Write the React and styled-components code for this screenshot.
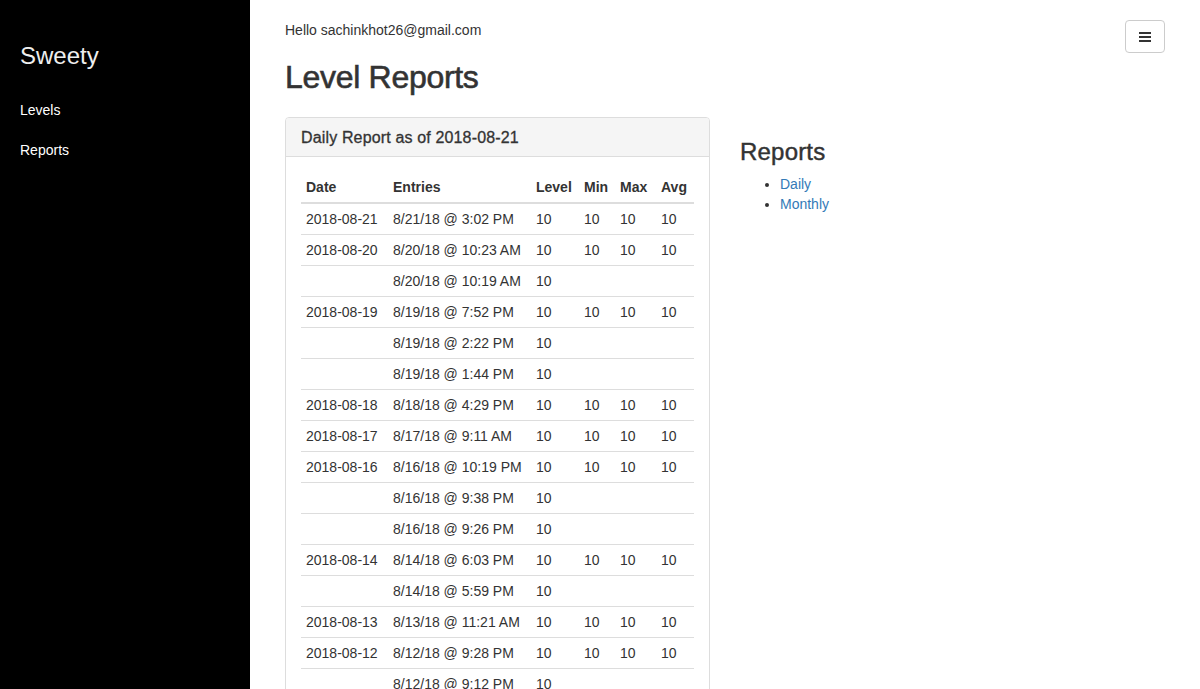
import React from "react";
import styled, { createGlobalStyle } from "styled-components";

const Global = createGlobalStyle`
  html, body { margin: 0; padding: 0; }
  body {
    font-family: "Liberation Sans", Arial, Helvetica, sans-serif;
    font-size: 14px;
    line-height: 20px;
    color: #333;
    background: #fff;
  }
  * { box-sizing: border-box; }
`;

const Layout = styled.div`
  display: flex;
  min-height: 100vh;
`;

const Sidebar = styled.nav`
  width: 250px;
  flex: 0 0 250px;
  background: #000;
  padding: 40px 20px 0;
`;

const Brand = styled.div`
  color: #eee;
  font-size: 24px;
  line-height: 32px;
  margin-bottom: 28px;
`;

const SideLink = styled.a`
  display: block;
  color: #fff;
  text-decoration: none;
  font-size: 14px;
  line-height: 20px;
  margin-bottom: 20px;
`;

const Main = styled.main`
  flex: 1;
  padding: 20px 35px 0;
`;

const TopBar = styled.div`
  display: flex;
  justify-content: space-between;
  align-items: flex-start;
  height: 20px;
`;

const MenuButton = styled.button`
  width: 40px;
  height: 33px;
  background: #fff;
  border: 1px solid #ccc;
  border-radius: 4px;
  display: flex;
  align-items: center;
  justify-content: center;
  padding: 0;
  color: #333;
`;

const Title = styled.h1`
  font-size: 32px;
  font-weight: 400;
  letter-spacing: -0.3px;
  -webkit-text-stroke: 0.6px #333;
  line-height: 35px;
  margin: 20px 0 22px;
`;

const Columns = styled.div`
  display: flex;
  gap: 30px;
  align-items: flex-start;
`;

const Panel = styled.section`
  width: 425px;
  border: 1px solid #ddd;
  border-radius: 4px;
  background: #fff;
`;

const PanelHeading = styled.div`
  background: #f5f5f5;
  border-bottom: 1px solid #ddd;
  border-radius: 3px 3px 0 0;
  padding: 11px 15px 9px;
  font-size: 16px;
  letter-spacing: 0.15px;
  -webkit-text-stroke: 0.3px #333;
  line-height: 17.6px;
`;

const PanelBody = styled.div`
  padding: 15px;
`;

const Table = styled.table`
  width: 100%;
  border-collapse: collapse;
  border-spacing: 0;
`;

const Th = styled.th`
  text-align: left;
  font-weight: bold;
  padding: 5px;
  line-height: 20px;
  border-bottom: 2px solid #ddd;
  width: ${(p) => p.$w}px;
`;

const Td = styled.td`
  padding: 5px;
  line-height: 20px;
  border-top: 1px solid #ddd;
  white-space: nowrap;
`;

const Side = styled.aside`
  padding-top: 0;
`;

const SideTitle = styled.h3`
  font-size: 24px;
  font-weight: 400;
  -webkit-text-stroke: 0.45px #333;
  letter-spacing: 0.2px;
  line-height: 26px;
  margin: 22px 0 9px;
`;

const List = styled.ul`
  margin: 0;
  padding-left: 40px;
`;

const ListLink = styled.a`
  color: #337ab7;
  text-decoration: none;
`;

const full = ["10", "10", "10", "10"];
const one = ["10", "", "", ""];

const rows = [
  ["2018-08-21", "8/21/18 @ 3:02 PM", full],
  ["2018-08-20", "8/20/18 @ 10:23 AM", full],
  ["", "8/20/18 @ 10:19 AM", one],
  ["2018-08-19", "8/19/18 @ 7:52 PM", full],
  ["", "8/19/18 @ 2:22 PM", one],
  ["", "8/19/18 @ 1:44 PM", one],
  ["2018-08-18", "8/18/18 @ 4:29 PM", full],
  ["2018-08-17", "8/17/18 @ 9:11 AM", full],
  ["2018-08-16", "8/16/18 @ 10:19 PM", full],
  ["", "8/16/18 @ 9:38 PM", one],
  ["", "8/16/18 @ 9:26 PM", one],
  ["2018-08-14", "8/14/18 @ 6:03 PM", full],
  ["", "8/14/18 @ 5:59 PM", one],
  ["2018-08-13", "8/13/18 @ 11:21 AM", full],
  ["2018-08-12", "8/12/18 @ 9:28 PM", full],
  ["", "8/12/18 @ 9:12 PM", one],
  ["2018-08-11", "8/11/18 @ 8:40 PM", full],
];

const Hamburger = () => (
  <svg width="12" height="12" viewBox="0 0 12 12" aria-hidden="true">
    <rect x="0" y="1" width="12" height="2" fill="#333" />
    <rect x="0" y="5" width="12" height="2" fill="#333" />
    <rect x="0" y="9" width="12" height="2" fill="#333" />
  </svg>
);

export default function App() {
  return (
    <>
      <Global />
      <Layout>
        <Sidebar>
          <Brand>Sweety</Brand>
          <SideLink href="#">Levels</SideLink>
          <SideLink href="#">Reports</SideLink>
        </Sidebar>
        <Main>
          <TopBar>
            <span>Hello sachinkhot26@gmail.com</span>
            <MenuButton aria-label="menu">
              <Hamburger />
            </MenuButton>
          </TopBar>
          <Title>Level Reports</Title>
          <Columns>
            <Panel>
              <PanelHeading>Daily Report as of 2018-08-21</PanelHeading>
              <PanelBody>
                <Table>
                  <thead>
                    <tr>
                      <Th $w={87}>Date</Th>
                      <Th $w={143}>Entries</Th>
                      <Th $w={48}>Level</Th>
                      <Th $w={36}>Min</Th>
                      <Th $w={41}>Max</Th>
                      <Th $w={38}>Avg</Th>
                    </tr>
                  </thead>
                  <tbody>
                    {rows.map(([d, e, v], i) => (
                      <tr key={i}>
                        <Td>{d}</Td>
                        <Td>{e}</Td>
                        {v.map((x, j) => (
                          <Td key={j}>{x}</Td>
                        ))}
                      </tr>
                    ))}
                  </tbody>
                </Table>
              </PanelBody>
            </Panel>
            <Side>
              <SideTitle>Reports</SideTitle>
              <List>
                <li>
                  <ListLink href="#">Daily</ListLink>
                </li>
                <li>
                  <ListLink href="#">Monthly</ListLink>
                </li>
              </List>
            </Side>
          </Columns>
        </Main>
      </Layout>
    </>
  );
}
